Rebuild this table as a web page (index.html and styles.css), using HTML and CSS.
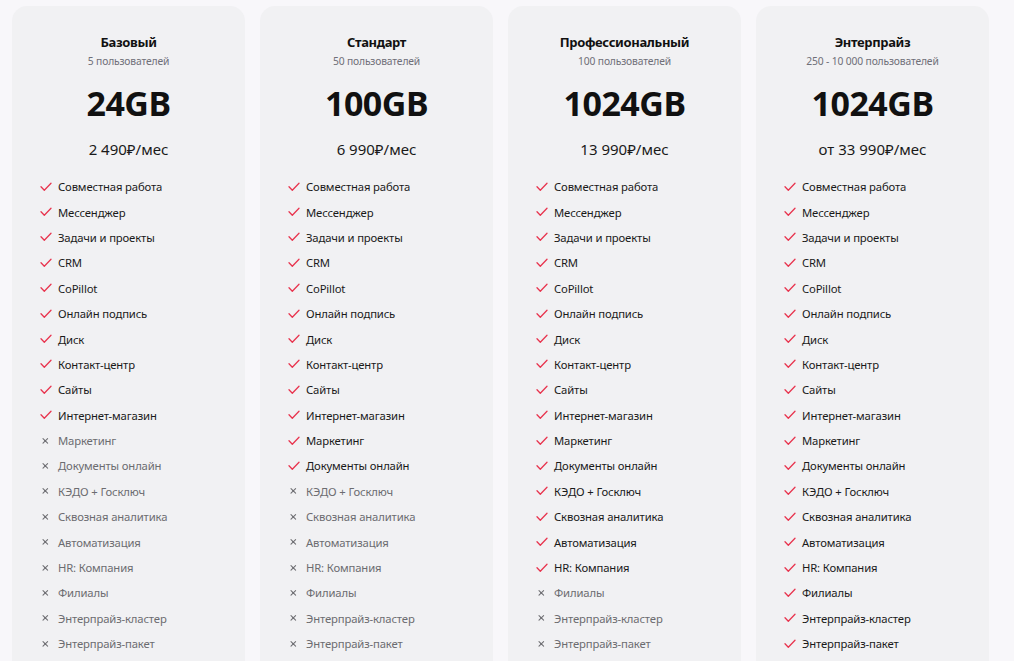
FILE: index.html
```html
<!DOCTYPE html>
<html lang="ru">
<head>
<meta charset="utf-8">
<title>Тарифы</title>
<link rel="stylesheet" href="styles.css">
</head>
<body>
<div class="plans">
  <section class="card">
    <h2 class="name">Базовый</h2>
    <div class="users">5 пользователей</div>
    <div class="storage">24GB</div>
    <div class="price">2 490₽/мес</div>
    <ul class="features">
      <li class="on"><svg class="ic" viewBox="0 0 12 10"><polyline points="1,4.8 4.3,8.2 11,1.3"/></svg>Совместная работа</li>
      <li class="on"><svg class="ic" viewBox="0 0 12 10"><polyline points="1,4.8 4.3,8.2 11,1.3"/></svg>Мессенджер</li>
      <li class="on"><svg class="ic" viewBox="0 0 12 10"><polyline points="1,4.8 4.3,8.2 11,1.3"/></svg>Задачи и проекты</li>
      <li class="on"><svg class="ic" viewBox="0 0 12 10"><polyline points="1,4.8 4.3,8.2 11,1.3"/></svg>CRM</li>
      <li class="on"><svg class="ic" viewBox="0 0 12 10"><polyline points="1,4.8 4.3,8.2 11,1.3"/></svg>CoPillot</li>
      <li class="on"><svg class="ic" viewBox="0 0 12 10"><polyline points="1,4.8 4.3,8.2 11,1.3"/></svg>Онлайн подпись</li>
      <li class="on"><svg class="ic" viewBox="0 0 12 10"><polyline points="1,4.8 4.3,8.2 11,1.3"/></svg>Диск</li>
      <li class="on"><svg class="ic" viewBox="0 0 12 10"><polyline points="1,4.8 4.3,8.2 11,1.3"/></svg>Контакт-центр</li>
      <li class="on"><svg class="ic" viewBox="0 0 12 10"><polyline points="1,4.8 4.3,8.2 11,1.3"/></svg>Сайты</li>
      <li class="on"><svg class="ic" viewBox="0 0 12 10"><polyline points="1,4.8 4.3,8.2 11,1.3"/></svg>Интернет-магазин</li>
      <li class="off"><svg class="ic" viewBox="0 0 12 10"><path d="M3,2.6 L7.6,7.2 M7.6,2.6 L3,7.2"/></svg>Маркетинг</li>
      <li class="off"><svg class="ic" viewBox="0 0 12 10"><path d="M3,2.6 L7.6,7.2 M7.6,2.6 L3,7.2"/></svg>Документы онлайн</li>
      <li class="off"><svg class="ic" viewBox="0 0 12 10"><path d="M3,2.6 L7.6,7.2 M7.6,2.6 L3,7.2"/></svg>КЭДО + Госключ</li>
      <li class="off"><svg class="ic" viewBox="0 0 12 10"><path d="M3,2.6 L7.6,7.2 M7.6,2.6 L3,7.2"/></svg>Сквозная аналитика</li>
      <li class="off"><svg class="ic" viewBox="0 0 12 10"><path d="M3,2.6 L7.6,7.2 M7.6,2.6 L3,7.2"/></svg>Автоматизация</li>
      <li class="off"><svg class="ic" viewBox="0 0 12 10"><path d="M3,2.6 L7.6,7.2 M7.6,2.6 L3,7.2"/></svg>HR: Компания</li>
      <li class="off"><svg class="ic" viewBox="0 0 12 10"><path d="M3,2.6 L7.6,7.2 M7.6,2.6 L3,7.2"/></svg>Филиалы</li>
      <li class="off"><svg class="ic" viewBox="0 0 12 10"><path d="M3,2.6 L7.6,7.2 M7.6,2.6 L3,7.2"/></svg>Энтерпрайз-кластер</li>
      <li class="off"><svg class="ic" viewBox="0 0 12 10"><path d="M3,2.6 L7.6,7.2 M7.6,2.6 L3,7.2"/></svg>Энтерпрайз-пакет</li>
    </ul>
  </section>

  <section class="card">
    <h2 class="name">Стандарт</h2>
    <div class="users">50 пользователей</div>
    <div class="storage">100GB</div>
    <div class="price">6 990₽/мес</div>
    <ul class="features">
      <li class="on"><svg class="ic" viewBox="0 0 12 10"><polyline points="1,4.8 4.3,8.2 11,1.3"/></svg>Совместная работа</li>
      <li class="on"><svg class="ic" viewBox="0 0 12 10"><polyline points="1,4.8 4.3,8.2 11,1.3"/></svg>Мессенджер</li>
      <li class="on"><svg class="ic" viewBox="0 0 12 10"><polyline points="1,4.8 4.3,8.2 11,1.3"/></svg>Задачи и проекты</li>
      <li class="on"><svg class="ic" viewBox="0 0 12 10"><polyline points="1,4.8 4.3,8.2 11,1.3"/></svg>CRM</li>
      <li class="on"><svg class="ic" viewBox="0 0 12 10"><polyline points="1,4.8 4.3,8.2 11,1.3"/></svg>CoPillot</li>
      <li class="on"><svg class="ic" viewBox="0 0 12 10"><polyline points="1,4.8 4.3,8.2 11,1.3"/></svg>Онлайн подпись</li>
      <li class="on"><svg class="ic" viewBox="0 0 12 10"><polyline points="1,4.8 4.3,8.2 11,1.3"/></svg>Диск</li>
      <li class="on"><svg class="ic" viewBox="0 0 12 10"><polyline points="1,4.8 4.3,8.2 11,1.3"/></svg>Контакт-центр</li>
      <li class="on"><svg class="ic" viewBox="0 0 12 10"><polyline points="1,4.8 4.3,8.2 11,1.3"/></svg>Сайты</li>
      <li class="on"><svg class="ic" viewBox="0 0 12 10"><polyline points="1,4.8 4.3,8.2 11,1.3"/></svg>Интернет-магазин</li>
      <li class="on"><svg class="ic" viewBox="0 0 12 10"><polyline points="1,4.8 4.3,8.2 11,1.3"/></svg>Маркетинг</li>
      <li class="on"><svg class="ic" viewBox="0 0 12 10"><polyline points="1,4.8 4.3,8.2 11,1.3"/></svg>Документы онлайн</li>
      <li class="off"><svg class="ic" viewBox="0 0 12 10"><path d="M3,2.6 L7.6,7.2 M7.6,2.6 L3,7.2"/></svg>КЭДО + Госключ</li>
      <li class="off"><svg class="ic" viewBox="0 0 12 10"><path d="M3,2.6 L7.6,7.2 M7.6,2.6 L3,7.2"/></svg>Сквозная аналитика</li>
      <li class="off"><svg class="ic" viewBox="0 0 12 10"><path d="M3,2.6 L7.6,7.2 M7.6,2.6 L3,7.2"/></svg>Автоматизация</li>
      <li class="off"><svg class="ic" viewBox="0 0 12 10"><path d="M3,2.6 L7.6,7.2 M7.6,2.6 L3,7.2"/></svg>HR: Компания</li>
      <li class="off"><svg class="ic" viewBox="0 0 12 10"><path d="M3,2.6 L7.6,7.2 M7.6,2.6 L3,7.2"/></svg>Филиалы</li>
      <li class="off"><svg class="ic" viewBox="0 0 12 10"><path d="M3,2.6 L7.6,7.2 M7.6,2.6 L3,7.2"/></svg>Энтерпрайз-кластер</li>
      <li class="off"><svg class="ic" viewBox="0 0 12 10"><path d="M3,2.6 L7.6,7.2 M7.6,2.6 L3,7.2"/></svg>Энтерпрайз-пакет</li>
    </ul>
  </section>

  <section class="card">
    <h2 class="name">Профессиональный</h2>
    <div class="users">100 пользователей</div>
    <div class="storage">1024GB</div>
    <div class="price">13 990₽/мес</div>
    <ul class="features">
      <li class="on"><svg class="ic" viewBox="0 0 12 10"><polyline points="1,4.8 4.3,8.2 11,1.3"/></svg>Совместная работа</li>
      <li class="on"><svg class="ic" viewBox="0 0 12 10"><polyline points="1,4.8 4.3,8.2 11,1.3"/></svg>Мессенджер</li>
      <li class="on"><svg class="ic" viewBox="0 0 12 10"><polyline points="1,4.8 4.3,8.2 11,1.3"/></svg>Задачи и проекты</li>
      <li class="on"><svg class="ic" viewBox="0 0 12 10"><polyline points="1,4.8 4.3,8.2 11,1.3"/></svg>CRM</li>
      <li class="on"><svg class="ic" viewBox="0 0 12 10"><polyline points="1,4.8 4.3,8.2 11,1.3"/></svg>CoPillot</li>
      <li class="on"><svg class="ic" viewBox="0 0 12 10"><polyline points="1,4.8 4.3,8.2 11,1.3"/></svg>Онлайн подпись</li>
      <li class="on"><svg class="ic" viewBox="0 0 12 10"><polyline points="1,4.8 4.3,8.2 11,1.3"/></svg>Диск</li>
      <li class="on"><svg class="ic" viewBox="0 0 12 10"><polyline points="1,4.8 4.3,8.2 11,1.3"/></svg>Контакт-центр</li>
      <li class="on"><svg class="ic" viewBox="0 0 12 10"><polyline points="1,4.8 4.3,8.2 11,1.3"/></svg>Сайты</li>
      <li class="on"><svg class="ic" viewBox="0 0 12 10"><polyline points="1,4.8 4.3,8.2 11,1.3"/></svg>Интернет-магазин</li>
      <li class="on"><svg class="ic" viewBox="0 0 12 10"><polyline points="1,4.8 4.3,8.2 11,1.3"/></svg>Маркетинг</li>
      <li class="on"><svg class="ic" viewBox="0 0 12 10"><polyline points="1,4.8 4.3,8.2 11,1.3"/></svg>Документы онлайн</li>
      <li class="on"><svg class="ic" viewBox="0 0 12 10"><polyline points="1,4.8 4.3,8.2 11,1.3"/></svg>КЭДО + Госключ</li>
      <li class="on"><svg class="ic" viewBox="0 0 12 10"><polyline points="1,4.8 4.3,8.2 11,1.3"/></svg>Сквозная аналитика</li>
      <li class="on"><svg class="ic" viewBox="0 0 12 10"><polyline points="1,4.8 4.3,8.2 11,1.3"/></svg>Автоматизация</li>
      <li class="on"><svg class="ic" viewBox="0 0 12 10"><polyline points="1,4.8 4.3,8.2 11,1.3"/></svg>HR: Компания</li>
      <li class="off"><svg class="ic" viewBox="0 0 12 10"><path d="M3,2.6 L7.6,7.2 M7.6,2.6 L3,7.2"/></svg>Филиалы</li>
      <li class="off"><svg class="ic" viewBox="0 0 12 10"><path d="M3,2.6 L7.6,7.2 M7.6,2.6 L3,7.2"/></svg>Энтерпрайз-кластер</li>
      <li class="off"><svg class="ic" viewBox="0 0 12 10"><path d="M3,2.6 L7.6,7.2 M7.6,2.6 L3,7.2"/></svg>Энтерпрайз-пакет</li>
    </ul>
  </section>

  <section class="card">
    <h2 class="name">Энтерпрайз</h2>
    <div class="users">250 - 10 000 пользователей</div>
    <div class="storage">1024GB</div>
    <div class="price">от 33 990₽/мес</div>
    <ul class="features">
      <li class="on"><svg class="ic" viewBox="0 0 12 10"><polyline points="1,4.8 4.3,8.2 11,1.3"/></svg>Совместная работа</li>
      <li class="on"><svg class="ic" viewBox="0 0 12 10"><polyline points="1,4.8 4.3,8.2 11,1.3"/></svg>Мессенджер</li>
      <li class="on"><svg class="ic" viewBox="0 0 12 10"><polyline points="1,4.8 4.3,8.2 11,1.3"/></svg>Задачи и проекты</li>
      <li class="on"><svg class="ic" viewBox="0 0 12 10"><polyline points="1,4.8 4.3,8.2 11,1.3"/></svg>CRM</li>
      <li class="on"><svg class="ic" viewBox="0 0 12 10"><polyline points="1,4.8 4.3,8.2 11,1.3"/></svg>CoPillot</li>
      <li class="on"><svg class="ic" viewBox="0 0 12 10"><polyline points="1,4.8 4.3,8.2 11,1.3"/></svg>Онлайн подпись</li>
      <li class="on"><svg class="ic" viewBox="0 0 12 10"><polyline points="1,4.8 4.3,8.2 11,1.3"/></svg>Диск</li>
      <li class="on"><svg class="ic" viewBox="0 0 12 10"><polyline points="1,4.8 4.3,8.2 11,1.3"/></svg>Контакт-центр</li>
      <li class="on"><svg class="ic" viewBox="0 0 12 10"><polyline points="1,4.8 4.3,8.2 11,1.3"/></svg>Сайты</li>
      <li class="on"><svg class="ic" viewBox="0 0 12 10"><polyline points="1,4.8 4.3,8.2 11,1.3"/></svg>Интернет-магазин</li>
      <li class="on"><svg class="ic" viewBox="0 0 12 10"><polyline points="1,4.8 4.3,8.2 11,1.3"/></svg>Маркетинг</li>
      <li class="on"><svg class="ic" viewBox="0 0 12 10"><polyline points="1,4.8 4.3,8.2 11,1.3"/></svg>Документы онлайн</li>
      <li class="on"><svg class="ic" viewBox="0 0 12 10"><polyline points="1,4.8 4.3,8.2 11,1.3"/></svg>КЭДО + Госключ</li>
      <li class="on"><svg class="ic" viewBox="0 0 12 10"><polyline points="1,4.8 4.3,8.2 11,1.3"/></svg>Сквозная аналитика</li>
      <li class="on"><svg class="ic" viewBox="0 0 12 10"><polyline points="1,4.8 4.3,8.2 11,1.3"/></svg>Автоматизация</li>
      <li class="on"><svg class="ic" viewBox="0 0 12 10"><polyline points="1,4.8 4.3,8.2 11,1.3"/></svg>HR: Компания</li>
      <li class="on"><svg class="ic" viewBox="0 0 12 10"><polyline points="1,4.8 4.3,8.2 11,1.3"/></svg>Филиалы</li>
      <li class="on"><svg class="ic" viewBox="0 0 12 10"><polyline points="1,4.8 4.3,8.2 11,1.3"/></svg>Энтерпрайз-кластер</li>
      <li class="on"><svg class="ic" viewBox="0 0 12 10"><polyline points="1,4.8 4.3,8.2 11,1.3"/></svg>Энтерпрайз-пакет</li>
    </ul>
  </section>
</div>
</body>
</html>
```
FILE: styles.css
```css
html, body {
  margin: 0;
  padding: 0;
  background: #f8f7fa;
  overflow: hidden;
  height: 661px;
}
body {
  font-family: "Noto Sans", "Open Sans", "Liberation Sans", sans-serif;
  color: #111;
}
.plans {
  display: flex;
  gap: 15px;
  padding: 6px 0 0 12px;
}
.card {
  width: 233px;
  flex: 0 0 233px;
  background: #f1f1f3;
  border-radius: 15px;
  padding: 27px 0 40px;
  box-sizing: border-box;
  height: 720px;
}
.name {
  margin: 0;
  text-align: center;
  font-size: 13px;
  line-height: 18px;
  font-weight: 700;
  color: #111;
  letter-spacing: -0.35px;
}
.users {
  margin-top: 3px;
  text-align: center;
  font-size: 10.3px;
  line-height: 14px;
  color: #6f6f78;
  letter-spacing: -0.15px;
}
.storage {
  margin-top: 14px;
  text-align: center;
  font-size: 34px;
  line-height: 42px;
  font-weight: 700;
  color: #111;
  letter-spacing: -0.5px;
}
.price {
  margin-top: 15px;
  text-align: center;
  font-size: 15px;
  line-height: 20px;
  color: #1a1a1a;
}
.features {
  list-style: none;
  margin: 15px 0 0;
  padding: 0 0 0 28px;
}
.features li {
  display: flex;
  align-items: center;
  height: 25.4px;
  font-size: 11.3px;
  letter-spacing: -0.15px;
}
.ic {
  width: 12px;
  height: 10px;
  margin-right: 6px;
  fill: none;
  stroke-linecap: round;
  stroke-linejoin: round;
}
.on { color: #1a1a1a; }
.on .ic { stroke: #e8344e; stroke-width: 1.3; }
.off { color: #6c6c70; }
.off .ic { stroke: #707074; stroke-width: 1.1; }
```
